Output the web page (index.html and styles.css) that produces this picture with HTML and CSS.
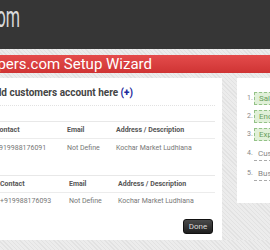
FILE: index.html
```html
<!DOCTYPE html>
<html lang="en">
<head>
    <meta charset="UTF-8">
    <meta name="viewport" content="width=device-width, initial-scale=1.0">
    <title>Setup Wizard</title>
    <link rel="stylesheet" href="styles.css">
</head>
<body>
    <div class="topbar">
        <div class="brand">ThinkPapers.com</div>
    </div>

    <div class="strip">
        <div class="wizard-title">ThinkPapers.com Setup Wizard</div>
    </div>

    <div class="content">
        <div class="panel-main">
            <h2>Add customers account here <span class="add">(<b>+</b>)</span></h2>
            <div class="sep"></div>

            <table class="accounts">
                <tr>
                    <th class="col-contact">Contact</th>
                    <th class="col-email">Email</th>
                    <th>Address / Description</th>
                </tr>
                <tr>
                    <td>+919988176091</td>
                    <td>Not Define</td>
                    <td>Kochar Market Ludhiana</td>
                </tr>
            </table>

            <table class="accounts second">
                <tr>
                    <th class="col-contact">Contact</th>
                    <th class="col-email">Email</th>
                    <th>Address / Description</th>
                </tr>
                <tr>
                    <td>+919988176093</td>
                    <td>Not Define</td>
                    <td>Kochar Market Ludhiana</td>
                </tr>
            </table>

            <div class="actions">
                <button class="btn-done">Done</button>
            </div>
        </div>

        <div class="panel-steps">
            <ol class="steps">
                <li><span class="num">1.</span><span class="step done">Salary</span></li>
                <li><span class="num">2.</span><span class="step done">Enquiry</span></li>
                <li><span class="num">3.</span><span class="step done">Expenses</span></li>
                <li><span class="num">4.</span><span class="step">Customers</span></li>
                <li><span class="num">5.</span><span class="step">Business</span></li>
            </ol>
        </div>
    </div>
</body>
</html>
```

FILE: styles.css
```css
* {
    box-sizing: border-box;
}

body {
    margin: 0;
    font-family: Roboto, 'Liberation Sans', sans-serif;
    background-color: #e9e9e9;
    background-image: repeating-linear-gradient(45deg, #e2e2e2 0, #e2e2e2 1px, #ececec 1px, #ececec 3px);
    overflow: hidden;
}

/* barre du haut */
.topbar {
    height: 49px;
    background-color: #363636;
}

.brand {
    width: 20px;
    display: flex;
    justify-content: flex-end;
    white-space: nowrap;
    padding-top: 2px;
    font-family: Roboto, 'Liberation Sans', sans-serif;
    font-size: 29px;
    line-height: 30px;
    color: #dadada;
    transform: scaleX(0.56);
    transform-origin: right center;
}

/* bandeau rouge */
.strip {
    margin-top: 6px;
    height: 18px;
    background-image: linear-gradient(#e44c4c, #cf3434);
}

.wizard-title {
    width: 152px;
    display: flex;
    justify-content: flex-end;
    white-space: nowrap;
    font-size: 15px;
    line-height: 18px;
    color: #fff;
}

.content {
    display: flex;
    gap: 15px;
    padding-top: 5px;
}

/* panneau principal */
.panel-main {
    flex: none;
    width: 252px;
    margin-left: -30px;
    background-color: #fff;
    padding: 7px 7px 6px 13px;
}

.panel-main h2 {
    margin: 0 0 0 6px;
    font-size: 10px;
    line-height: 16px;
    font-weight: bold;
    color: #444;
    white-space: nowrap;
}

.add {
    color: #1d2a9c;
}

.sep {
    margin: 4px 0 15px 12px;
    border-top: 1px dotted #e2e2e2;
}

.accounts {
    margin-left: 12px;
    width: calc(100% - 12px);
    border-collapse: collapse;
    table-layout: fixed;
    border-top: 1px solid #e8e8e8;
    font-size: 7px;
}

.col-contact {
    width: 72px;
}

.col-email {
    width: 49px;
}

.accounts.second {
    margin-top: 18px;
    margin-left: 17px;
    width: calc(100% - 17px);
}

.second .col-contact {
    width: 69px;
}

.accounts th {
    height: 17px;
    padding: 0;
    text-align: left;
    font-weight: bold;
    color: #555;
    border-bottom: 1px solid #ececec;
    white-space: nowrap;
}

.accounts td {
    height: 18px;
    padding: 0;
    color: #777;
    white-space: nowrap;
}

.actions {
    display: flex;
    justify-content: flex-end;
    padding-right: 2px;
    margin-top: 9px;
}

.btn-done {
    height: 15px;
    width: 30px;
    padding: 0;
    border: 1px solid #111;
    border-radius: 3px;
    background-image: linear-gradient(#4a4a4a, #1f1f1f);
    color: #ddd;
    font-family: Roboto, 'Liberation Sans', sans-serif;
    font-size: 8px;
    cursor: pointer;
}

/* panneau des étapes */
.panel-steps {
    flex: none;
    width: 100px;
    height: 125px;
    background-color: #fff;
    padding: 14px 0 0 10px;
}

.steps {
    list-style: none;
    margin: 0;
    padding: 0;
}

.steps li {
    display: flex;
    align-items: center;
    margin-bottom: 5px;
    font-size: 8px;
    line-height: 9px;
}

.num {
    width: 7px;
    font-size: 7px;
    color: #888;
}

.step {
    flex: 1;
    padding: 3px 4px 2px;
    color: #888;
    border-bottom: 1px dashed #aaa;
    white-space: nowrap;
}

.step.done {
    padding: 1px 4px;
    background-color: #e0f0d8;
    color: #6a9e5c;
    border: 1px dashed #93c287;
}
```
